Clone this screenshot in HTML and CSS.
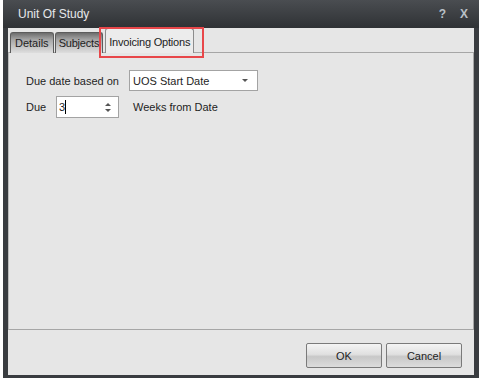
FILE: index.html
```html
<!DOCTYPE html>
<html>
<head>
  <title>Unit Of Study</title>
  <link rel="stylesheet" href="styles.css">
</head>
<body>
  <div class="window">
    <div class="titlebar">
      <span class="title">Unit Of Study</span>
      <span class="title-buttons">
        <span class="help">?</span>
        <span class="close">X</span>
      </span>
    </div>

    <div class="client">
      <div class="tabs">
        <div class="tab">Details</div>
        <div class="tab">Subjects</div>
        <div class="tab selected">Invoicing Options</div>
        <div class="highlight"></div>
      </div>

      <div class="panel">
        <div class="row">
          <span class="label wide">Due date based on</span>
          <div class="combo">
            <span>UOS Start Date</span>
            <span class="combo-arrow"></span>
          </div>
        </div>
        <div class="row">
          <span class="label short">Due</span>
          <div class="spinner">
            <span class="value">3</span><span class="caret"></span>
            <span class="spin">
              <span class="up"></span>
              <span class="down"></span>
            </span>
          </div>
          <span class="after">Weeks from Date</span>
        </div>
      </div>

      <div class="buttons">
        <button class="btn">OK</button>
        <button class="btn">Cancel</button>
      </div>
    </div>
  </div>
</body>
</html>
```

FILE: styles.css
```css
body {
  margin: 0;
  padding: 0;
  background-color: #fff;
  font-family: "Liberation Sans", Arial, sans-serif;
  font-size: 11px;
  color: #1e1e1e;
}

.window {
  margin-left: 3px;
  width: 476px;
  height: 378px;
  background-color: #393c40;
  display: flex;
  flex-direction: column;
}

.titlebar {
  height: 28px;
  display: flex;
  align-items: center;
  justify-content: space-between;
  background: linear-gradient(#4a4d51, #2f3235);
  color: #e6e8ea;
}

.title {
  margin-left: 15px;
  font-size: 12px;
}

.title-buttons {
  display: flex;
  gap: 14px;
  margin-right: 11px;
  font-weight: bold;
  font-size: 12px;
  color: #b9c0c7;
}

.client {
  position: relative;
  flex: 1;
  margin: 0 5px 3px 5px;
  background-color: #e6e6e6;
  display: flex;
  flex-direction: column;
}

.tabs {
  position: relative;
  display: flex;
  align-items: flex-end;
  height: 25px;
  padding-left: 2px;
  margin-bottom: -1px;
}

.tab {
  height: 20px;
  line-height: 21px;
  padding: 0 3px;
  margin-right: 1px;
  border: 1px solid #5c5c5c;
  border-bottom: none;
  border-radius: 3px 3px 0 0;
  background: linear-gradient(#6d6d6d, #a8a8a8 35%, #dedede);
  color: #222;
  letter-spacing: -0.2px;
  z-index: 1;
}

.tab:first-child {
  padding: 0 4px;
  letter-spacing: 0;
}

.tab.selected {
  height: 24px;
  line-height: 26px;
  margin-left: 1px;
  padding: 0 3px;
  border-color: #8c8c8c;
  background: #ececec;
  z-index: 2;
}

.highlight {
  position: absolute;
  left: 91px;
  top: -1px;
  width: 101px;
  height: 27px;
  border: 2px solid #e8474a;
  z-index: 3;
}

.panel {
  height: 278px;
  border: 1px solid #a6a6a6;
  border-left-color: #bcbcbc;
  background-color: #e6e6e6;
  padding: 17px 0 0 17px;
  box-sizing: border-box;
}

.row {
  display: flex;
  align-items: center;
  margin-bottom: 5px;
}

.label.wide {
  width: 103px;
}

.label.short {
  width: 30px;
}

.combo {
  width: 129px;
  height: 21px;
  box-sizing: border-box;
  border: 1px solid #a3a3a3;
  background-color: #fff;
  display: flex;
  align-items: center;
  justify-content: space-between;
  padding: 0 9px 0 3px;
}

.combo-arrow {
  width: 0;
  height: 0;
  border-left: 3px solid transparent;
  border-right: 3px solid transparent;
  border-top: 3px solid #555;
}

.spinner {
  width: 63px;
  height: 22px;
  box-sizing: border-box;
  border: 1px solid #a3a3a3;
  background-color: #fff;
  display: flex;
  align-items: center;
  padding-left: 2px;
}

.caret {
  width: 1px;
  height: 14px;
  background-color: #000;
}

.spin {
  margin-left: auto;
  margin-right: 7px;
  display: flex;
  flex-direction: column;
  gap: 3px;
}

.spin .up {
  border-left: 3px solid transparent;
  border-right: 3px solid transparent;
  border-bottom: 3px solid #555;
}

.spin .down {
  border-left: 3px solid transparent;
  border-right: 3px solid transparent;
  border-top: 3px solid #555;
}

.after {
  margin-left: 14px;
}

.buttons {
  display: flex;
  justify-content: flex-end;
  gap: 4px;
  padding: 13px 12px 0 0;
}

.btn {
  width: 76px;
  height: 25px;
  border: 1px solid #7a7a7a;
  border-radius: 2px;
  background: linear-gradient(#f4f4f4, #e0e0e0 45%, #c8c8c8 55%, #dcdcdc);
  font-family: "Liberation Sans", Arial, sans-serif;
  font-size: 11px;
  color: #1e1e1e;
  padding: 0;
}
```
